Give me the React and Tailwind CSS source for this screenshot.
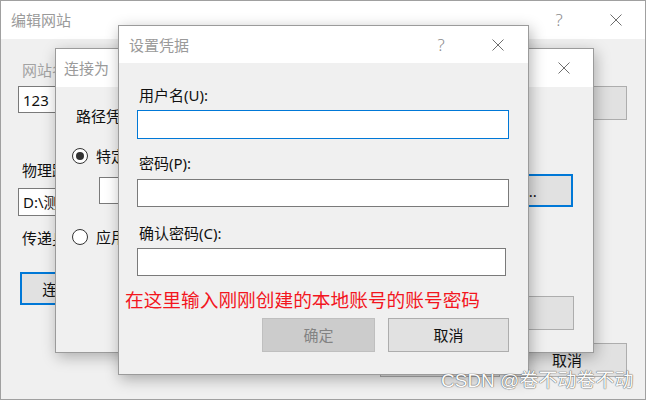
import React from "react";

const CloseIcon = () => (
  <svg width="12" height="12" viewBox="0 0 12 12" className="block">
    <path d="M0.5 0.5 L11.5 11.5 M11.5 0.5 L0.5 11.5" stroke="#6e6e6e" strokeWidth="1" fill="none" />
  </svg>
);

const TitleBar = ({ title, height, help, pl, pr }) => (
  <div className={`flex items-center bg-white ${height} ${pl} ${pr}`}>
    <span className="text-[15px] leading-[20px] text-[#9a9a9a]">{title}</span>
    <div className="ml-auto flex items-center">
      {help && (
        <span className="w-[20px] text-center text-[17px] font-light leading-[20px] text-[#8c8c8c] mr-[41px]">?</span>
      )}
      <CloseIcon />
    </div>
  </div>
);

// focused = blue 2px border (default button in Windows dialogs)
const Btn = ({ children, focused, className = "" }) => (
  <div
    className={`flex items-center justify-center bg-[#e1e1e1] text-[15px] text-[#111] ${
      focused ? "border-2 border-[#0078d7]" : "border border-[#adadad]"
    } ${className}`}
  >
    {children}
  </div>
);

const Input = ({ className = "", children }) => (
  <div className={`flex items-center bg-white border border-[#7a7a7a] pl-[4px] text-[15px] text-[#111] ${className}`}>
    {children}
  </div>
);

const Radio = ({ checked }) => (
  <div className="flex h-[16px] w-[16px] items-center justify-center rounded-full border border-[#333] bg-white">
    {checked && <div className="h-[8px] w-[8px] rounded-full bg-[#333]" />}
  </div>
);

export default function App() {
  return (
    <div className="relative h-[400px] w-[647px] overflow-hidden bg-white font-['Noto_Sans','Noto_Sans_CJK_SC',sans-serif] text-[15px] leading-[20px] text-[#111]">
      {/* 编辑网站 */}
      <div className="absolute left-0 top-0 flex h-[400px] w-[646px] flex-col border border-[#a0a0a0]">
        <TitleBar title="编辑网站" height="h-[38px]" help pl="pl-[10px]" pr="pr-[23px]" />
        <div className="flex flex-1 flex-col bg-[#f0f0f0] pl-[17px] pr-[18px] pt-[21px]">
          <div className="ml-[4px] text-[#a3a3a3]">网站名称(S):</div>
          <div className="mt-[6px] flex items-start">
            <Input className="h-[27px] w-[230px]">123</Input>
            <Btn className="ml-auto h-[34px] w-[116px]" />
          </div>
          <div className="ml-[4px] mt-[40px]">物理路径(P):</div>
          <Input className="mt-[8px] h-[28px] w-[480px]">D:\测试</Input>
          <div className="ml-[4px] mt-[12px]">传递身份验证:</div>
          <div className="mt-[24px] ml-[2px] flex gap-[8px]">
            <Btn focused className="h-[33px] w-[120px]">连接为(C)...</Btn>
            <Btn className="h-[33px] w-[130px]">测试设置(G)...</Btn>
          </div>
          <div className="mt-[38px] flex justify-end gap-[7px]">
            <Btn className="h-[34px] w-[120px]">确定</Btn>
            <Btn className="h-[34px] w-[120px]">取消</Btn>
          </div>
        </div>
      </div>

      {/* 连接为 */}
      <div className="absolute left-[55px] top-[48px] flex h-[305px] w-[539px] flex-col border border-[#9b9b9b] shadow-[2px_4px_14px_rgba(0,0,0,0.28)]">
        <TitleBar title="连接为" height="h-[38px]" pl="pl-[8px]" pr="pr-[23px]" />
        <div className="flex flex-1 flex-col bg-[#f0f0f0] pt-[19px]">
          <div className="pl-[20px]">路径凭据:</div>
          <div className="mt-[20px] flex h-[20px] items-center gap-[8px] pl-[16px]">
            <Radio checked />
            <span>特定用户(S):</span>
          </div>
          <div className="mt-[8px] flex h-[33px] items-center gap-[10px] pl-[43px] pr-[20px]">
            <Input className="h-[27px] flex-1" />
            <Btn focused className="h-[33px] w-[132px]">设置(E)...</Btn>
          </div>
          <div className="mt-[20px] flex h-[20px] items-center gap-[8px] pl-[16px]">
            <Radio />
            <span>应用程序用户(通过身份验证)(A)</span>
          </div>
          <div className="mt-[49px] flex justify-end gap-[7px] pr-[19px]">
            <Btn className="h-[34px] w-[120px]">确定</Btn>
            <Btn className="h-[34px] w-[120px]" />
          </div>
        </div>
      </div>

      {/* 设置凭据 */}
      <div className="absolute left-[118px] top-[25px] flex h-[350px] w-[411px] flex-col border border-[#9b9b9b] shadow-[2px_4px_14px_rgba(0,0,0,0.3)]">
        <TitleBar title="设置凭据" height="h-[37px]" help pl="pl-[10px]" pr="pr-[24px]" />
        <div className="flex flex-1 flex-col bg-[#f0f0f0] pt-[22px]">
          <div className="pl-[20px]">用户名(U):</div>
          <div className="ml-[18px] mt-[5px] h-[29px] w-[372px] border border-[#0078d7] bg-white" />
          <div className="mt-[14px] pl-[20px]">密码(P):</div>
          <Input className="ml-[18px] mt-[6px] h-[28px] w-[372px]" />
          <div className="mt-[16px] pl-[20px]">确认密码(C):</div>
          <Input className="ml-[18px] mt-[5px] h-[28px] w-[369px]" />
          <div className="ml-[6px] mt-[11px] text-[18.7px] leading-[26px] text-[#f3161e]">
            在这里输入刚刚创建的本地账号的账号密码
          </div>
          <div className="ml-[143px] mt-[5px] flex gap-[13px]">
            <div className="flex h-[34px] w-[113px] items-center justify-center border border-[#bfbfbf] bg-[#cccccc] text-[#838383]">
              确定
            </div>
            <Btn className="h-[34px] w-[121px]">取消</Btn>
          </div>
        </div>
      </div>

      {/* watermark */}
      <div className="absolute left-[441px] top-[369px] text-[19px] leading-[24px] text-[#fbfbfb] font-['Liberation_Sans','Noto_Sans_CJK_SC',sans-serif] [text-shadow:0_0_1px_#555,0_0_1px_#555]">
        CSDN @卷不动卷不动
      </div>
    </div>
  );
}
